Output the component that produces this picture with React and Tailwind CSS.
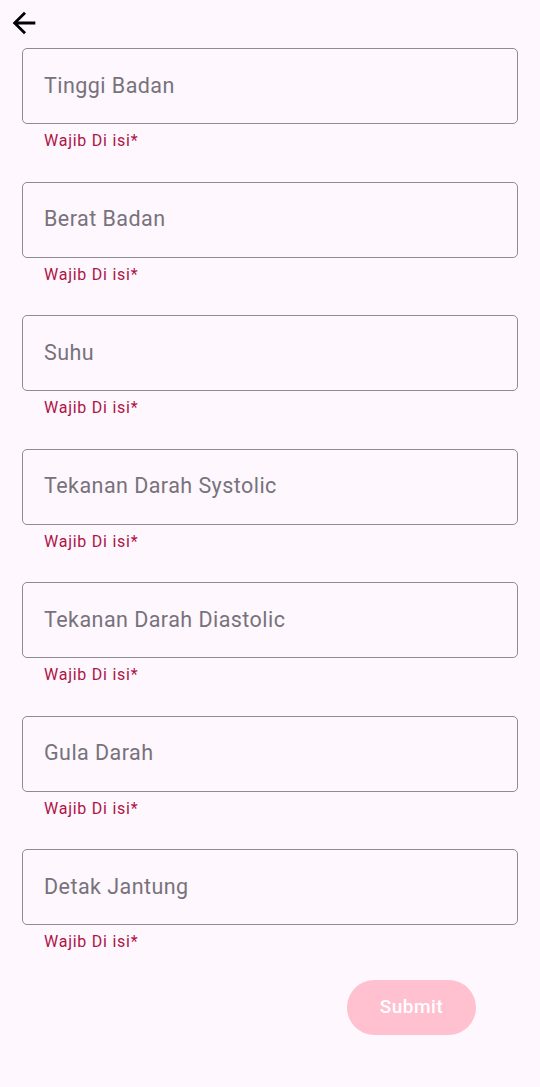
const fields = [
  "Tinggi Badan",
  "Berat Badan",
  "Suhu",
  "Tekanan Darah Systolic",
  "Tekanan Darah Diastolic",
  "Gula Darah",
  "Detak Jantung",
];

function IconBack() {
  return (
    <svg width="34" height="34" viewBox="0 0 24 24" fill="#000">
      <path d="M20 11H7.83l5.59-5.59L12 4l-8 8 8 8 1.41-1.41L7.83 13H20v-2z" />
    </svg>
  );
}

function Field({ label }) {
  return (
    <div>
      <div className="h-[76px] border-[1.5px] border-[#8f8a94] rounded-[5px] flex items-center pl-[21px]">
        <span className="text-[21.5px] text-[#77727c] tracking-[0.45px]">
          {label}
        </span>
      </div>
      <p className="mt-[7px] pl-[22px] text-[16px] leading-[20px] text-[#ad1447] tracking-[0.75px]">
        Wajib Di isi*
      </p>
    </div>
  );
}

export default function App() {
  return (
    <div
      className="min-h-[1087px] w-[540px] bg-[#fef7fd]"
      style={{ fontFamily: "Roboto, 'Noto Sans', sans-serif" }}
    >
      <div className="h-[40px] pt-[6px] pl-[7px]">
        <IconBack />
      </div>
      <div className="mt-[8px] px-[22px] flex flex-col gap-[30.5px]">
        {fields.map((f) => (
          <Field key={f} label={f} />
        ))}
      </div>
      <div className="flex justify-end pr-[64px] mt-[28px]">
        <button className="w-[129px] h-[55px] rounded-full bg-[#ffc0d0] text-white text-[19px] font-medium tracking-[0.5px]">
          Submit
        </button>
      </div>
    </div>
  );
}
